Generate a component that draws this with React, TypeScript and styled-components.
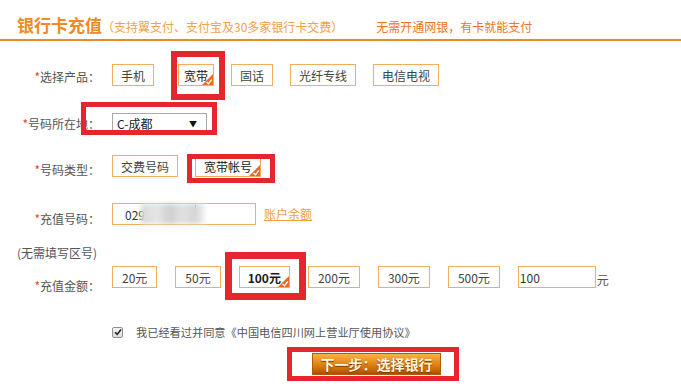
import styled, { createGlobalStyle } from "styled-components";

const GlobalStyle = createGlobalStyle`
  html, body {
    margin: 0;
    padding: 0;
    background: #fff;
  }
  body {
    font-family: "Noto Sans CJK SC", "Noto Sans", sans-serif;
    font-size: 12px;
    color: #555;
  }
`;

const Page = styled.div`
  width: 681px;
  height: 389px;
  overflow: hidden;
`;

const Header = styled.header`
  display: flex;
  align-items: baseline;
  height: 25px;
  padding: 14px 0 0 17px;
  border-bottom: 2px solid #ee8a22;
`;

const Title = styled.h1`
  margin: 0;
  font-size: 17px;
  line-height: 22px;
  font-weight: 700;
  color: #f08a24;
`;

const Sub = styled.span`
  font-size: 12px;
  color: #f4a04a;
`;

const Slogan = styled.span`
  margin-left: 33px;
  font-size: 12px;
  color: #f07428;
`;

const Form = styled.div`
  display: flex;
  flex-direction: column;
`;

const Row = styled.div<{ $mt: number }>`
  display: flex;
  align-items: flex-start;
  height: 22px;
  margin-top: ${(p) => p.$mt}px;
`;

const Label = styled.div<{ $dy: number }>`
  flex-shrink: 0;
  width: 100px;
  margin-right: 12px;
  padding-top: ${(p) => p.$dy}px;
  text-align: right;
  font-size: 12px;
  line-height: 16px;
  color: #555;
`;

const Star = styled.span`
  color: #e8452c;
`;

const Options = styled.div<{ $gap: number }>`
  display: flex;
  align-items: center;
  gap: ${(p) => p.$gap}px;
`;

const Option = styled.span<{ $on?: boolean; $bold?: boolean; $px?: number }>`
  position: relative;
  display: inline-flex;
  align-items: center;
  justify-content: center;
  box-sizing: border-box;
  height: 22px;
  padding: 0 ${(p) => p.$px ?? 8}px;
  border: 1px solid #f2ad5e;
  background: #fff;
  color: ${(p) => (p.$on ? "#1a1a1a" : "#444")};
  font-size: 12px;
  font-weight: ${(p) => (p.$bold ? 700 : 400)};
  white-space: nowrap;
`;

const Mark = styled.span<{
  $t: number;
  $r: number;
  $b: number;
  $l: number;
  $w: number;
  $ml?: number;
}>`
  position: relative;
  display: inline-flex;
  margin-left: ${(p) => p.$ml ?? 0}px;
  &::after {
    content: "";
    position: absolute;
    top: -${(p) => p.$t}px;
    right: -${(p) => p.$r}px;
    bottom: -${(p) => p.$b}px;
    left: -${(p) => p.$l}px;
    border: ${(p) => p.$w}px solid #e5262e;
    pointer-events: none;
    z-index: 2;
  }
`;

const CornerIcon = styled.svg`
  position: absolute;
  right: 0;
  bottom: 0;
`;

const Corner = () => (
  <CornerIcon width="11" height="11" viewBox="0 0 11 11">
    <polygon points="11,0 11,11 0,11" fill="#ee6a1a" />
    <path d="M4.5 8 L6.5 9.8 L9.8 5.5" stroke="#fff" strokeWidth="1.3" fill="none" />
  </CornerIcon>
);

const Select = styled.div`
  box-sizing: border-box;
  display: flex;
  align-items: center;
  justify-content: space-between;
  width: 95px;
  height: 21px;
  padding: 0 9px 0 4px;
  border: 1px solid #a9a9a9;
  background: #fff;
  font-size: 12px;
  color: #222;
`;

const Arrow = styled.span`
  font-size: 8px;
  color: #111;
`;

const TextBox = styled.div<{ $w: number; $pl: number }>`
  box-sizing: border-box;
  display: flex;
  align-items: center;
  width: ${(p) => p.$w}px;
  height: 22px;
  padding-left: ${(p) => p.$pl}px;
  border: 1px solid #f2ad5e;
  background: #fff;
  font-size: 12px;
  color: #333;
`;

const Blur = styled.span`
  display: inline-block;
  width: 64px;
  height: 20px;
  margin-left: -4px;
  background: linear-gradient(
    90deg,
    #d8d8d8 0%,
    #e6e6e6 25%,
    #cfcfcf 45%,
    #e2e2e2 65%,
    #d4d4d4 85%,
    #f4f4f4 100%
  );
  filter: blur(2px);
`;

const Cursor = styled.span`
  display: inline-block;
  width: 1px;
  height: 9px;
  margin: -10px 0 0 -10px;
  background: #444;
`;

const Link = styled.a`
  margin-left: 8px;
  padding-top: 3px;
  font-size: 12px;
  line-height: 16px;
  color: #f0a040;
  text-decoration: underline;
`;

const Unit = styled.span`
  margin-left: 1px;
  padding-top: 6px;
  font-size: 12px;
  line-height: 16px;
  color: #555;
`;

const Note = styled.div`
  margin-top: 20px;
  padding-left: 17px;
  font-size: 12px;
  line-height: 16px;
  color: #555;
`;

const Agree = styled.div`
  display: flex;
  align-items: center;
  height: 16px;
  margin-top: 36px;
  padding-left: 112px;
  font-size: 11.2px;
  color: #555;
`;

const CheckBox = styled.span`
  box-sizing: border-box;
  display: inline-flex;
  align-items: center;
  justify-content: center;
  width: 11px;
  height: 11px;
  margin-right: 13px;
  border: 1px solid #8f8f8f;
  border-radius: 2px;
  background: linear-gradient(#f4f4f4, #dcdcdc);
`;

const SubmitRow = styled.div`
  display: flex;
  margin-top: 13px;
  padding-left: 312px;
`;

const Submit = styled.button`
  box-sizing: border-box;
  width: 129px;
  height: 22px;
  padding: 0;
  border: 1px solid #b35a05;
  background: linear-gradient(#f6b24a 0%, #e48a1c 45%, #cf6c08 75%, #a84c02 100%);
  color: #fff6dc;
  font-family: "Noto Sans CJK SC", sans-serif;
  font-size: 14px;
  font-weight: 700;
  line-height: 20px;
  text-shadow: 0 1px 1px #7a3500;
`;

export default function App() {
  return (
    <>
      <GlobalStyle />
      <Page>
        <Header>
          <Title>银行卡充值</Title>
          <Sub>（支持翼支付、支付宝及30多家银行卡交费）</Sub>
          <Slogan>无需开通网银，有卡就能支付</Slogan>
        </Header>
        <Form>
          <Row $mt={23}>
            <Label $dy={5}>
              <Star>*</Star>选择产品：
            </Label>
            <Options $gap={17}>
              <Option>手机</Option>
              <Mark $t={13} $r={11} $b={14} $l={7} $w={6} $ml={7}>
                <Option $on $px={5}>
                  宽带
                  <Corner />
                </Option>
              </Mark>
              <Option>固话</Option>
              <Option>光纤专线</Option>
              <Option>电信电视</Option>
            </Options>
          </Row>
          <Row $mt={27}>
            <Label $dy={3}>
              <Star>*</Star>号码所在地：
            </Label>
            <Mark $t={11} $r={10} $b={1} $l={31} $w={5}>
              <Select>
                C-成都<Arrow>▼</Arrow>
              </Select>
            </Mark>
          </Row>
          <Row $mt={20}>
            <Label $dy={7}>
              <Star>*</Star>号码类型：
            </Label>
            <Options $gap={17}>
              <Option>交费号码</Option>
              <Mark $t={1} $r={14} $b={6} $l={8} $w={5}>
                <Option $on $px={8}>
                  宽带帐号
                  <Corner />
                </Option>
              </Mark>
            </Options>
          </Row>
          <Row $mt={26}>
            <Label $dy={8}>
              <Star>*</Star>充值号码：
            </Label>
            <TextBox $w={144} $pl={12}>
              029<Blur />
              <Cursor />
            </TextBox>
            <Link>账户余额</Link>
          </Row>
          <Note>(无需填写区号)</Note>
          <Row $mt={5}>
            <Label $dy={12}>
              <Star>*</Star>充值金额：
            </Label>
            <Options $gap={18}>
              <Option $px={9}>20元</Option>
              <Option $px={9}>50元</Option>
              <Mark $t={14} $r={16} $b={12} $l={14} $w={7}>
                <Option $on $bold $px={8}>
                  100元
                  <Corner />
                </Option>
              </Mark>
              <Option $px={9}>200元</Option>
              <Option $px={9}>300元</Option>
              <Option $px={9}>500元</Option>
              <TextBox $w={78} $pl={1}>
                100
              </TextBox>
            </Options>
            <Unit>元</Unit>
          </Row>
          <Agree>
            <CheckBox>
              <svg width="8" height="8" viewBox="0 0 8 8">
                <path d="M1 4.2 L3.2 6.4 L7 1.4" stroke="#222" strokeWidth="1.6" fill="none" />
              </svg>
            </CheckBox>
            我已经看过并同意《中国电信四川网上营业厅使用协议》
          </Agree>
          <SubmitRow>
            <Mark $t={6} $r={18} $b={6} $l={25} $w={5}>
              <Submit>下一步：选择银行</Submit>
            </Mark>
          </SubmitRow>
        </Form>
      </Page>
    </>
  );
}
